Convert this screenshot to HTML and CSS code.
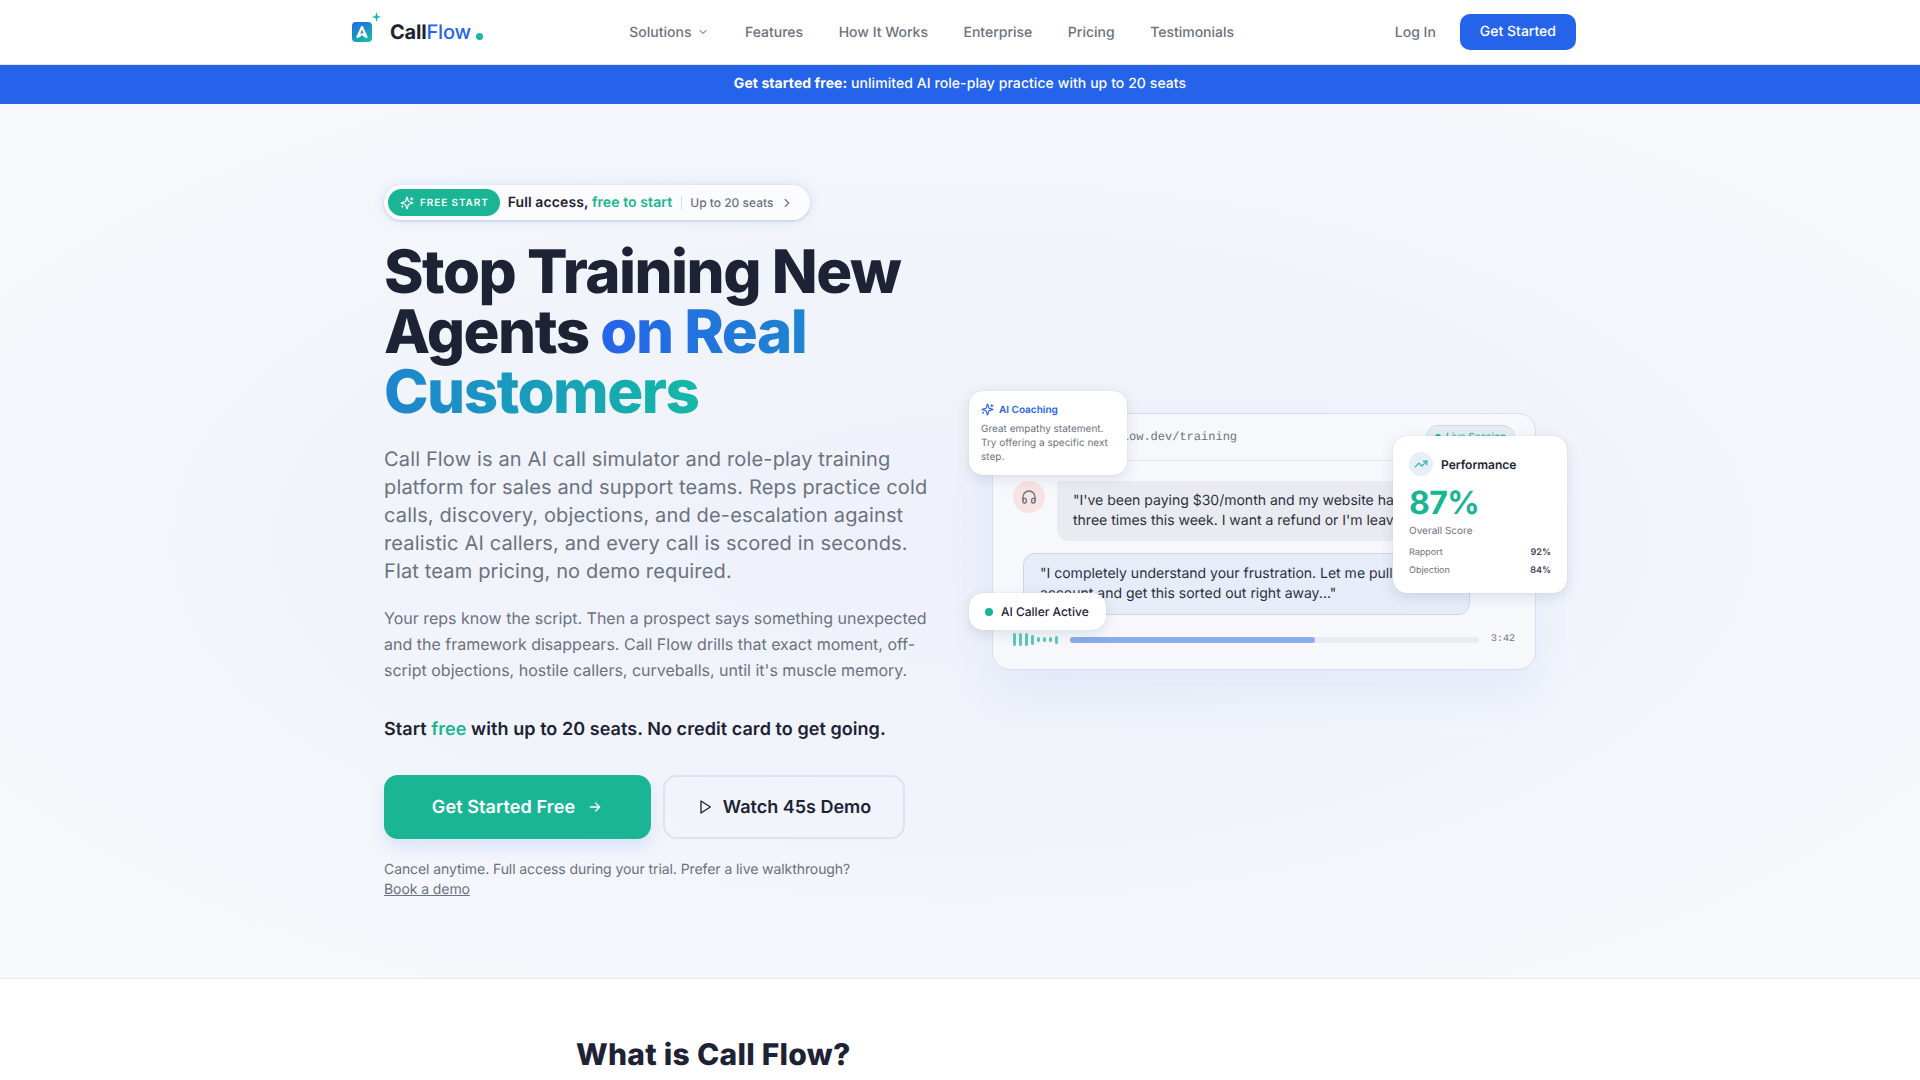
FILE: index.html
```html
<!DOCTYPE html>
<html lang="en">
<head>
    <meta charset="UTF-8">
    <meta name="viewport" content="width=device-width, initial-scale=1.0">
    <title>Call Flow - AI Call Simulator</title>
    <link rel="stylesheet" href="styles.css">
</head>
<body>
    <header class="site-header">
        <div class="header-inner">
            <a class="logo" href="#">
                <span class="logo-mark">
                    <svg width="30" height="32" viewBox="0 0 30 32">
                        <defs>
                            <linearGradient id="logoGrad" x1="0" y1="0" x2="0.6" y2="1">
                                <stop offset="0" stop-color="#2563eb"/>
                                <stop offset="1" stop-color="#14b8a6"/>
                            </linearGradient>
                        </defs>
                        <rect x="0" y="10" width="20" height="20" rx="4" fill="url(#logoGrad)"/>
                        <path d="M5.5 25 L10 15 L14.5 25 M7.5 24 Q10 20.5 12.5 24" fill="none" stroke="#fff" stroke-width="2.2" stroke-linecap="round" stroke-linejoin="round"/>
                        <path d="M24.5 0 L25.6 3.9 L29.5 5 L25.6 6.1 L24.5 10 L23.4 6.1 L19.5 5 L23.4 3.9 Z" fill="#14b8a6"/>
                    </svg>
                </span>
                <span class="logo-text">Call<span class="logo-flow">Flow</span></span>
                <span class="logo-dot"></span>
            </a>
            <nav class="main-nav">
                <a href="#" class="nav-solutions">Solutions
                    <svg width="12" height="12" viewBox="0 0 24 24" fill="none" stroke="#4b5563" stroke-width="2" stroke-linecap="round" stroke-linejoin="round"><path d="M6 9l6 6 6-6"/></svg>
                </a>
                <a href="#">Features</a>
                <a href="#">How It Works</a>
                <a href="#">Enterprise</a>
                <a href="#">Pricing</a>
                <a href="#">Testimonials</a>
            </nav>
            <div class="header-actions">
                <a href="#" class="login">Log In</a>
                <a href="#" class="btn-small">Get Started</a>
            </div>
        </div>
    </header>

    <div class="promo-bar"><strong>Get started free:</strong> unlimited AI role-play practice with up to 20 seats</div>

    <section class="hero">
        <div class="hero-grid">
            <div class="hero-copy">
                <div class="badge">
                    <span class="badge-pill">
                        <svg width="14" height="14" viewBox="0 0 24 24" fill="none" stroke="#fff" stroke-width="2" stroke-linecap="round" stroke-linejoin="round"><path d="M9.937 15.5A2 2 0 0 0 8.5 14.063l-6.135-1.582a.5.5 0 0 1 0-.962L8.5 9.936A2 2 0 0 0 9.937 8.5l1.582-6.135a.5.5 0 0 1 .963 0L14.063 8.5A2 2 0 0 0 15.5 9.937l6.135 1.581a.5.5 0 0 1 0 .964L15.5 14.063a2 2 0 0 0-1.437 1.437l-1.582 6.135a.5.5 0 0 1-.963 0z"/><path d="M20 3v4M22 5h-4M4 17v2M5 18H3"/></svg>
                        FREE START
                    </span>
                    <span class="badge-main">Full access, <em>free to start</em></span>
                    <span class="badge-sub">Up to 20 seats</span>
                    <svg class="badge-chevron" width="14" height="14" viewBox="0 0 24 24" fill="none" stroke="#6b7280" stroke-width="2" stroke-linecap="round" stroke-linejoin="round"><path d="M9 6l6 6-6 6"/></svg>
                </div>
                <h1>Stop Training New Agents <span class="gradient-text">on Real Customers</span></h1>
                <p class="lead">Call Flow is an AI call simulator and role-play training platform for sales and support teams. Reps practice cold calls, discovery, objections, and de-escalation against realistic AI callers, and every call is scored in seconds. Flat team pricing, no demo required.</p>
                <p class="sub">Your reps know the script. Then a prospect says something unexpected and the framework disappears. Call Flow drills that exact moment, off-script objections, hostile callers, curveballs, until it's muscle memory.</p>
                <p class="start-line">Start <em>free</em> with up to 20 seats. No credit card to get going.</p>
                <div class="cta-row">
                    <a href="#" class="btn-primary">Get Started Free
                        <svg width="16" height="16" viewBox="0 0 24 24" fill="none" stroke="currentColor" stroke-width="2" stroke-linecap="round" stroke-linejoin="round"><path d="M5 12h14M13 6l6 6-6 6"/></svg>
                    </a>
                    <a href="#" class="btn-outline">
                        <svg width="16" height="16" viewBox="0 0 24 24" fill="none" stroke="currentColor" stroke-width="2" stroke-linecap="round" stroke-linejoin="round"><path d="M6 3l14 9-14 9z"/></svg>
                        Watch 45s Demo
                    </a>
                </div>
                <p class="fine-print">Cancel anytime. Full access during your trial. Prefer a live walkthrough? <a href="#">Book a demo</a></p>
            </div>

            <div class="hero-visual">
                <div class="call-card">
                    <div class="call-bar">
                        <span class="call-url">app.callflow.dev/training</span>
                        <span class="live-pill"><i></i>Live Session</span>
                    </div>
                    <div class="call-body">
                        <div class="msg-row">
                            <span class="avatar">
                                <svg width="16" height="16" viewBox="0 0 24 24" fill="none" stroke="#6b7280" stroke-width="2" stroke-linecap="round" stroke-linejoin="round"><path d="M3 18v-6a9 9 0 0 1 18 0v6"/><path d="M21 19a2 2 0 0 1-2 2h-1a2 2 0 0 1-2-2v-3a2 2 0 0 1 2-2h3zM3 19a2 2 0 0 0 2 2h1a2 2 0 0 0 2-2v-3a2 2 0 0 0-2-2H3z"/></svg>
                            </span>
                            <div class="bubble bubble-caller">"I've been paying $30/month and my website has been down three times this week. I want a refund or I'm leaving."</div>
                        </div>
                        <div class="bubble bubble-agent">"I completely understand your frustration. Let me pull up your account and get this sorted out right away..."</div>
                        <div class="player">
                            <div class="wave">
                                <i class="w18"></i><i class="w18"></i><i class="w18"></i><i class="w14"></i><i class="w6"></i><i class="w6"></i><i class="w6"></i><i class="w10"></i>
                            </div>
                            <div class="track"><div class="track-fill"></div></div>
                            <span class="time">3:42</span>
                        </div>
                    </div>
                </div>

                <div class="float-card coaching">
                    <div class="coaching-title">
                        <svg width="13" height="13" viewBox="0 0 24 24" fill="none" stroke="#2563eb" stroke-width="2" stroke-linecap="round" stroke-linejoin="round"><path d="M9.937 15.5A2 2 0 0 0 8.5 14.063l-6.135-1.582a.5.5 0 0 1 0-.962L8.5 9.936A2 2 0 0 0 9.937 8.5l1.582-6.135a.5.5 0 0 1 .963 0L14.063 8.5A2 2 0 0 0 15.5 9.937l6.135 1.581a.5.5 0 0 1 0 .964L15.5 14.063a2 2 0 0 0-1.437 1.437l-1.582 6.135a.5.5 0 0 1-.963 0z"/><path d="M20 3v4M22 5h-4M4 17v2M5 18H3"/></svg>
                        AI Coaching
                    </div>
                    <p>Great empathy statement. Try offering a specific next step.</p>
                </div>

                <div class="float-card performance">
                    <div class="perf-head">
                        <span class="perf-icon">
                            <svg width="14" height="14" viewBox="0 0 24 24" fill="none" stroke="#14b8a6" stroke-width="2" stroke-linecap="round" stroke-linejoin="round"><path d="M22 7l-8.5 8.5-5-5L2 17"/><path d="M16 7h6v6"/></svg>
                        </span>
                        Performance
                    </div>
                    <div class="perf-score">87%</div>
                    <div class="perf-label">Overall Score</div>
                    <div class="perf-row"><span>Rapport</span><b>92%</b></div>
                    <div class="perf-row"><span>Objection</span><b>84%</b></div>
                </div>

                <div class="float-card active-pill"><i></i>AI Caller Active</div>
            </div>
        </div>
    </section>

    <section class="about">
        <h2>What is Call Flow?</h2>
    </section>
</body>
</html>
```

FILE: styles.css
```css
* {
    box-sizing: border-box;
}

body {
    margin: 0;
    font-family: 'Inter', sans-serif;
    color: #1e2235;
    background: #fff;
    text-rendering: geometricPrecision;
}

a {
    color: inherit;
    text-decoration: none;
}

em {
    font-style: normal;
}

/* header */
.site-header {
    height: 65px;
    background: #fff;
    border-bottom: 1px solid #e5e7eb;
}

.header-inner {
    max-width: 1280px;
    height: 100%;
    margin: 0 auto;
    padding: 0 24px;
    display: flex;
    align-items: center;
}

.logo {
    display: flex;
    align-items: center;
    margin-left: 8px;
}

.logo-mark {
    display: flex;
    margin-right: 8px;
    margin-top: -8px;
}

.logo-text {
    font-size: 20px;
    font-weight: 700;
    letter-spacing: -0.01em;
    color: #1e2235;
}

.logo-flow {
    color: #2563eb;
    font-weight: 500;
}

.logo-dot {
    width: 7px;
    height: 7px;
    border-radius: 50%;
    background: #14b8a6;
    margin: 9px 0 0 5px;
}

.main-nav {
    display: flex;
    align-items: center;
    gap: 35.5px;
    margin-left: 146.5px;
    font-size: 14px;
    font-weight: 500;
    color: #6b7280;
}

.nav-solutions {
    display: flex;
    align-items: center;
    gap: 6px;
}

.header-actions {
    margin-left: auto;
    display: flex;
    align-items: center;
    gap: 24px;
    font-size: 14px;
    font-weight: 500;
}

.login {
    color: #6b7280;
}

.btn-small {
    display: block;
    padding: 0 20px;
    line-height: 36px;
    color: #fff;
    background: #2563eb;
    border-radius: 10px;
}

.promo-bar {
    height: 39px;
    line-height: 38px;
    text-align: center;
    font-size: 14px;
    font-weight: 500;
    letter-spacing: 0.07px;
    color: #fff;
    background: #2563eb;
}

.promo-bar strong {
    font-weight: 700;
}

/* hero */
.hero {
    height: 875px;
    padding: 81px 0 0;
    border-bottom: 1px solid #e5e7eb;
    background: radial-gradient(ellipse at 50% 50%, #eef1f9 0, #f1f4fa 45%, #f6f8fc 85%);
}

.hero-grid {
    width: 1152px;
    margin: 0 auto;
    display: grid;
    grid-template-columns: 544px 544px;
    gap: 64px;
}

.badge {
    display: inline-flex;
    align-items: center;
    height: 35px;
    padding: 0 16px 0 4px;
    background: rgba(255, 255, 255, 0.7);
    border-radius: 18px;
    box-shadow: 0 1px 3px rgba(30, 50, 90, 0.18), 0 0 14px rgba(37, 99, 235, 0.13);
    vertical-align: top;
}

.badge-pill {
    display: flex;
    align-items: center;
    gap: 6px;
    height: 27px;
    padding: 0 11px 0 12px;
    border-radius: 14px;
    background: #19b594;
    color: #fff;
    font-size: 10px;
    font-weight: 600;
    letter-spacing: 0.09em;
}

.badge-main {
    margin-left: 8px;
    font-size: 14px;
    font-weight: 600;
    letter-spacing: 0.1px;
}

.badge-main em {
    color: #19b594;
}

.badge-sub {
    margin-left: 9px;
    padding-left: 8px;
    border-left: 1px solid #d8dce6;
    font-size: 12px;
    font-weight: 500;
    line-height: 14px;
    color: #6b7280;
}

.badge-chevron {
    margin-left: 7px;
}

h1 {
    margin: 22px 0 0;
    font-size: 60px;
    line-height: 60px;
    font-weight: 800;
    letter-spacing: -0.025em;
    color: #1e2235;
}

.gradient-text {
    background: linear-gradient(90deg, #2563eb, #14b8a6);
    -webkit-background-clip: text;
    background-clip: text;
    color: transparent;
}

.lead {
    margin: 23px 0 0;
    font-size: 20px;
    line-height: 28px;
    letter-spacing: 0.15px;
    color: #6b7280;
}

.sub {
    margin: 20px 0 0;
    font-size: 16px;
    line-height: 26px;
    color: #6b7280;
}

.start-line {
    margin: 33px 0 0;
    font-size: 18px;
    line-height: 28px;
    font-weight: 600;
    letter-spacing: 0.06px;
}

.start-line em {
    color: #19b594;
}

.cta-row {
    display: flex;
    gap: 12px;
    margin-top: 31px;
}

.btn-primary,
.btn-outline {
    display: flex;
    align-items: center;
    justify-content: center;
    height: 64px;
    border-radius: 14px;
    font-size: 18px;
    font-weight: 600;
}

.btn-primary {
    width: 267px;
    gap: 12px;
    letter-spacing: 0.1px;
    color: #fff;
    background: #19b594;
    box-shadow: 0 8px 16px rgba(37, 99, 235, 0.13);
}

.btn-outline {
    width: 242px;
    gap: 10px;
    border: 2px solid #dfe3ec;
}

.fine-print {
    margin: 21px 0 0;
    max-width: 480px;
    font-size: 14px;
    line-height: 20px;
    letter-spacing: -0.08px;
    color: #6b7280;
}

.fine-print a {
    text-decoration: underline;
}

/* call mockup */
.hero-visual {
    position: relative;
    align-self: start;
    margin-top: 228px;
}

.call-card {
    height: 257px;
    background: #f6f8fc;
    border: 1px solid #d9e0ec;
    border-radius: 18px;
    box-shadow: 0 24px 48px rgba(37, 99, 235, 0.07);
    overflow: hidden;
}

.call-bar {
    height: 47px;
    display: flex;
    align-items: center;
    justify-content: space-between;
    padding: 0 20px 0 64px;
    border-bottom: 1px solid #e3e7f0;
}

.call-url {
    font-family: 'Liberation Mono', monospace;
    font-size: 12px;
    color: #6b7280;
}

.live-pill {
    display: flex;
    align-items: center;
    gap: 5px;
    height: 24px;
    padding: 0 8px;
    border-radius: 12px;
    background: #e5edf4;
    border: 1px solid #cfdbe6;
    font-size: 10px;
    font-weight: 500;
    color: #19b594;
}

.live-pill i {
    width: 6px;
    height: 6px;
    border-radius: 50%;
    background: #19b594;
}

.call-body {
    padding: 20px 20px 0;
}

.msg-row {
    display: flex;
    gap: 12px;
}

.avatar {
    flex: none;
    width: 32px;
    height: 32px;
    display: flex;
    align-items: center;
    justify-content: center;
    border-radius: 50%;
    background: #f7e3e3;
}

.bubble {
    font-size: 14px;
    line-height: 20px;
    padding: 10px 16px;
    color: #2b3040;
}

.bubble-caller {
    width: 443px;
    background: #e9ebf0;
    border-radius: 4px 12px 12px 12px;
}

.bubble-agent {
    width: 447px;
    margin: 12px 0 0 10px;
    background: #e6edf8;
    border: 1px solid #cbd8ea;
    border-radius: 12px 4px 12px 12px;
}

.player {
    display: flex;
    align-items: center;
    gap: 12px;
    margin-top: 18px;
}

.wave {
    width: 45px;
    display: flex;
    align-items: center;
    justify-content: space-between;
}

.wave i {
    width: 3px;
    border-radius: 2px;
    background: #5ec9bb;
}

.w18 { height: 13px; }
.w14 { height: 10px; }
.w10 { height: 8px; }
.w6 { height: 5px; }

.track {
    flex: 1;
    height: 6px;
    border-radius: 3px;
    background: #e8ebf1;
}

.track-fill {
    width: 60%;
    height: 100%;
    border-radius: 3px;
    background: #8cabe9;
}

.time {
    font-family: 'Liberation Mono', monospace;
    font-size: 10px;
    color: #6b7280;
}

/* floating cards over the mockup */
.float-card {
    position: absolute;
    background: #fff;
    border-radius: 14px;
    box-shadow: 0 4px 14px rgba(30, 50, 90, 0.12), 0 0 1px rgba(30, 50, 90, 0.2);
}

.coaching {
    left: -23px;
    top: -22px;
    width: 158px;
    height: 84px;
    padding: 12px 12px 0;
}

.coaching-title {
    display: flex;
    align-items: center;
    gap: 5px;
    font-size: 10px;
    font-weight: 600;
    color: #2563eb;
}

.coaching p {
    margin: 6px 0 0;
    font-size: 10px;
    line-height: 14px;
    color: #6b7280;
}

.performance {
    left: 401px;
    top: 23px;
    width: 174px;
    height: 157px;
    padding: 16px;
}

.perf-head {
    display: flex;
    align-items: center;
    gap: 8px;
    font-size: 12px;
    font-weight: 600;
}

.perf-icon {
    width: 24px;
    height: 24px;
    display: flex;
    align-items: center;
    justify-content: center;
    border-radius: 50%;
    background: #e9edf6;
}

.perf-score {
    margin-top: 9px;
    font-size: 32px;
    line-height: 36px;
    font-weight: 700;
    letter-spacing: -0.02em;
    color: #19b594;
}

.perf-label {
    margin: 3px 0 6px;
    font-size: 10px;
    line-height: 14px;
    color: #6b7280;
}

.perf-row {
    display: flex;
    justify-content: space-between;
    font-size: 9px;
    line-height: 18px;
    color: #6b7280;
}

.perf-row b {
    font-weight: 600;
    color: #374151;
}

.active-pill {
    left: -23px;
    top: 180px;
    width: 137px;
    height: 37px;
    display: flex;
    align-items: center;
    gap: 8px;
    padding-left: 16px;
    font-size: 12px;
    font-weight: 500;
}

.active-pill i {
    width: 8px;
    height: 8px;
    border-radius: 50%;
    background: #19b594;
}

/* below the fold */
.about {
    width: 768px;
    margin: 0 auto;
    padding-top: 58px;
}

.about h2 {
    margin: 0;
    font-size: 30px;
    line-height: 36px;
    font-weight: 800;
    letter-spacing: 0.27px;
}
```
